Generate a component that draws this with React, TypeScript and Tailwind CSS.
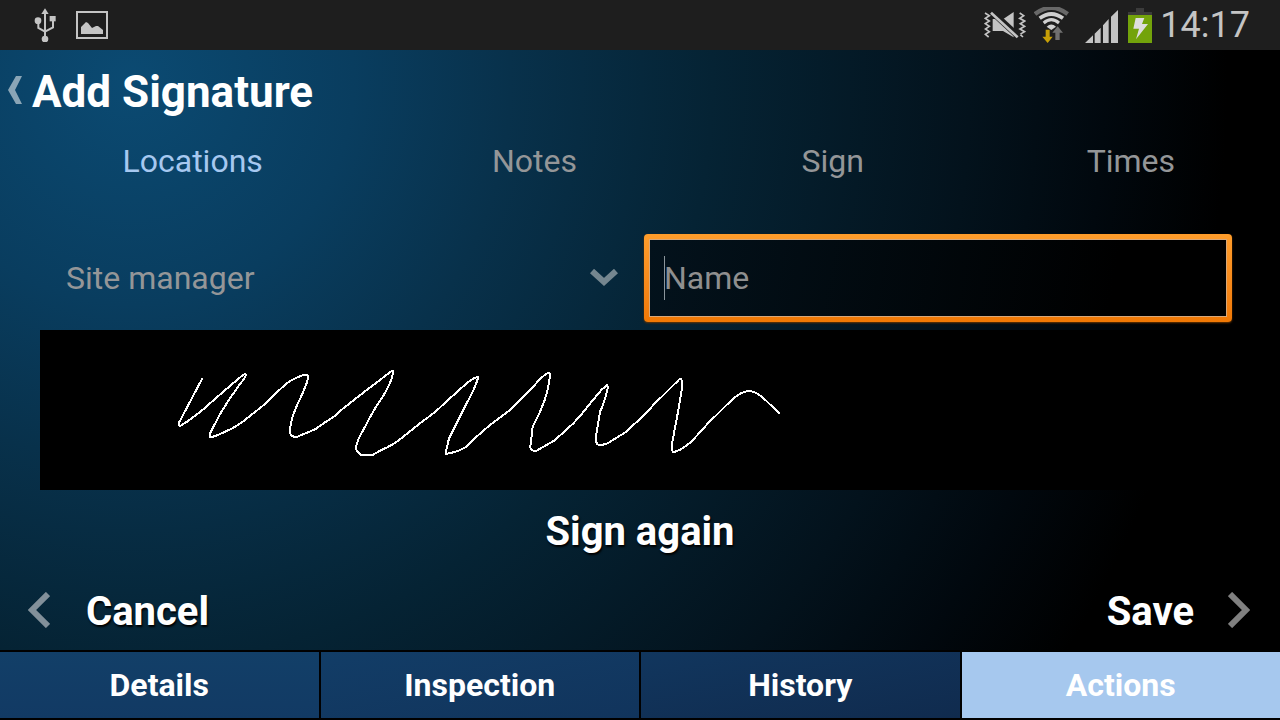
import type { ReactNode } from "react";

const UsbIcon = () => (
  <svg aria-hidden="true" className="h-[34px] w-[22px]" viewBox="102 24 66 102" fill="#c4c4c4" stroke="#c4c4c4">
    <path d="M135 25 146 42H124Z" stroke="none" />
    <path d="M135 40V112" strokeWidth="6" fill="none" />
    <circle cx="135" cy="117" r="10" stroke="none" />
    <circle cx="114" cy="62" r="10" stroke="none" />
    <rect x="149" y="48" width="18" height="16" stroke="none" />
    <path d="M115 66V84L135 95L159 82V62" strokeWidth="6" fill="none" />
  </svg>
);

const PictureIcon = () => (
  <svg aria-hidden="true" className="h-7 w-8" viewBox="0 0 32 28">
    <rect x="1" y="1" width="30" height="26" fill="none" stroke="#c4c4c4" strokeWidth="2" />
    <path d="M5 23V16L10 11L12 12L16 17L20 15L22 15L27 19V23Z" fill="#c4c4c4" />
  </svg>
);

const MuteVibrateIcon = () => (
  <svg aria-hidden="true" className="h-7 w-[42px]" viewBox="46 33 126 84">
    <path d="M49 39 62 47 50 55 62 63 50 71 62 79 50 87 62 95 50 103 60 111" fill="none" stroke="#c4c4c4" strokeWidth="5" />
    <path d="M153 39 165 47 153 55 168 63 155 71 168 79 154 87 168 95 154 103 163 111" fill="none" stroke="#c4c4c4" strokeWidth="5" />
    <path d="M72 57V93H103L135 112V36L104 57Z" fill="#c4c4c4" />
    <path d="M70 36 150 110" stroke="#1e1e1e" strokeWidth="19" />
    <path d="M67 38 147 112" stroke="#c4c4c4" strokeWidth="8" />
  </svg>
);

const WifiIcon = () => (
  <svg aria-hidden="true" className="h-9 w-[35px]" viewBox="196 21 105 108" fill="none">
    <path d="M199 42Q248 5 297 42" stroke="#686868" strokeWidth="13" />
    <path d="M213 55Q248 29 283 55" stroke="#d0d0d0" strokeWidth="11" />
    <path d="M225 69Q248 49 271 69" stroke="#d0d0d0" strokeWidth="9" />
    <path d="M234 80Q248 67 262 80L248 90Z" fill="#d0d0d0" />
    <path d="M231 89H243V110H252L237 129L221 110H231Z" fill="#c8a007" />
    <path d="M260 120H273V98H283L267 79L251 98H260Z" fill="#707070" />
  </svg>
);

const SignalIcon = () => (
  <svg aria-hidden="true" className="h-[33px] w-[33px]" viewBox="342 30 99 99" fill="#c4c4c4">
    <path d="M342 129 366 106V129ZM371 101 389 83V129H371ZM396 76 413 57V129H396ZM420 50 441 30V129H420Z" />
  </svg>
);

const BatteryIcon = () => (
  <svg aria-hidden="true" className="h-[35px] w-6" viewBox="471 24 72 105">
    <path d="M495 24H519V36H543V45H471V36H495Z" fill="#3b3b3b" />
    <rect x="471" y="45" width="72" height="84" fill="#73a30b" />
    <path d="M494 54H520L513 72H531L495 118L504 86H487Z" fill="#dedede" />
  </svg>
);

const Chevron = ({ d, box, className }: { d: string; box: string; className: string }) => (
  <svg aria-hidden="true" className={className} viewBox={box} fill="none" stroke="currentColor">
    <path d={d} strokeWidth="6" />
  </svg>
);

const signature =
  "M127 85 L57 218 Q54 228 62 227 C85 214 130 180 150 160 L205 112 L245 78 Q256 70 257 73 Q259 81 242 99 L210 145 Q184 184 171 210 L150 250 Q147 265 154 262 C180 254 190 247 204 241 C225 233 245 218 260 206 L310 166 L334 142 L380 100 Q417 75 439 75 Q448 76 443 89 C435 120 415 155 405 180 Q390 218 390 247 Q393 262 411 261 C430 252 450 245 467 237 L495 217 Q530 196 540 183 L620 120 L690 67 Q701 57 699 69 Q694 100 665 145 Q640 180 610 240 Q587 278 588 298 L602 315 L638 315 L660 302 Q700 285 720 268 L780 220 Q830 184 850 163 L922 98 Q948 78 955 82 Q945 115 920 160 L867 265 L857 309 Q857 314 865 310 Q895 306 921 289 L950 260 L990 225 L1050 180 L1125 104 Q1150 75 1165 68 Q1172 67 1170 79 Q1164 120 1154 150 Q1140 190 1118 231 L1111 290 Q1110 304 1130 302 L1184 271 L1240 220 Q1275 182 1285 167 L1324 120 L1341 105 Q1345 110 1341 124 Q1330 168 1320 185 L1307 265 Q1307 288 1325 285 Q1342 282 1351 275 L1396 247 L1455 193 L1480 165 L1555 91 Q1564 80 1565 91 Q1568 101 1566 115 Q1554 190 1540 260 Q1531 306 1541 306 Q1560 304 1595 274 L1645 219 L1710 155 Q1745 122 1768 123 Q1788 125 1810 144 L1860 192";

const TextButton = ({ children, className = "" }: { children: ReactNode; className?: string }) => (
  <button
    type="button"
    className={`flex items-center text-[40px] leading-[48px] font-bold text-white [text-shadow:1px_2px_2px_#000] ${className}`}
  >
    {children}
  </button>
);

const tabs = ["Locations", "Notes", "Sign", "Times"];
const sections = ["Details", "Inspection", "History", "Actions"];

export default function App() {
  return (
    <div className="flex min-h-screen flex-col bg-black font-[Roboto,sans-serif] text-white">
      <div className="flex h-[50px] items-center justify-between bg-[#1e1e1e] pr-[30px] pl-[34px] text-[#c4c4c4]">
        <div className="flex items-center gap-5">
          <UsbIcon />
          <PictureIcon />
        </div>
        <div className="flex items-center gap-2">
          <MuteVibrateIcon />
          <WifiIcon />
          <div className="flex items-end gap-2.5 pl-2">
            <SignalIcon />
            <BatteryIcon />
          </div>
          <time className="text-[36px] leading-[50px]">14:17</time>
        </div>
      </div>

      <div className="flex flex-1 flex-col bg-[radial-gradient(circle_1120px_at_130px_30px,#0b4a72_0%,#093d5f_20%,#08314b_34%,#052334_52%,#03121c_75%,#01080e_87%,#000_98%)]">
        <header className="flex h-[84px] items-center pl-2">
          <button type="button" aria-label="Back" className="pr-2 pb-1 text-[#8aa5b6]">
            <svg aria-hidden="true" className="h-7 w-4" viewBox="0 0 16 28" fill="currentColor">
              <path d="M8 0H14L7 14L14 28H8L0 14Z" />
            </svg>
          </button>
          <h1 className="text-[44px] leading-[52px] font-bold">Add Signature</h1>
        </header>

        <nav aria-label="Signature steps" className="grid h-14 grid-cols-[385fr_298fr_298fr_298fr]">
          {tabs.map((tab, i) => (
            <button
              key={tab}
              type="button"
              className={`pb-0.5 text-[32px] leading-[52px] ${i === 0 ? "text-[#a6c8f0]" : "text-[#949698]"}`}
            >
              {tab}
            </button>
          ))}
        </nav>

        <main className="flex flex-1 flex-col">
          <div className="grid grid-cols-2 gap-4 pt-11 pr-12 pl-10">
            <div className="relative flex items-center">
              <select
                aria-label="Role"
                className="h-[88px] w-full appearance-none bg-transparent pl-[26px] text-[32px] text-[#949698] outline-none"
              >
                <option>Site manager</option>
              </select>
              <Chevron
                d="M2 2 14 13 26 2"
                box="0 0 28 19"
                className="pointer-events-none absolute right-2.5 h-[19px] w-7 text-[#75868f]"
              />
            </div>
            <div className="relative flex items-center rounded-[4px] bg-linear-to-b from-[#ff9d2b] to-[#f07804] p-1.5 shadow-[0_1px_2px_#6b3500]">
              <div className="absolute inset-[5px] bg-[#d9a878]" />
              <div className="relative flex w-full items-center bg-[linear-gradient(100deg,#03121c,#000_80%)]">
                <input
                  type="text"
                  aria-label="Name"
                  placeholder="Name"
                  className="h-[76px] w-full bg-transparent pl-3.5 text-[32px] text-white placeholder-[#8f8f8f] outline-none"
                />
                <span aria-hidden="true" className="absolute left-3.5 h-11 w-px bg-[#8b959b]" />
              </div>
            </div>
          </div>

          <div className="mx-10 mt-2 bg-black">
            <svg role="img" aria-label="Signature" className="h-40 w-full" fill="none" shapeRendering="crispEdges">
              <g transform="translate(120 20) scale(0.33333)">
                <path d={signature} stroke="#fff" strokeWidth="6" strokeLinejoin="round" />
              </g>
            </svg>
          </div>

          <div className="flex flex-1 items-center justify-center pt-1">
            <TextButton>Sign again</TextButton>
          </div>

          <div className="flex h-20 items-center justify-between pr-[30px] pl-7">
            <TextButton className="gap-9">
              <Chevron d="M20 2 4 18 20 34" box="0 0 22 36" className="h-9 w-[22px] text-[#82909a]" />
              <span className="pt-1">Cancel</span>
            </TextButton>
            <TextButton className="gap-[34px]">
              <span className="pt-1">Save</span>
              <Chevron d="M2 2 18 18 2 34" box="0 0 22 36" className="h-9 w-[22px] text-[#808080]" />
            </TextButton>
          </div>
        </main>
      </div>

      <nav aria-label="Sections" className="bg-black py-0.5">
        <div className="grid grid-cols-4 gap-0.5 bg-black">
          {sections.map((section, i) => (
            <button
              key={section}
              type="button"
              className={`h-[66px] text-[32px] leading-[66px] font-bold text-white ${
                [
                  "bg-linear-to-b from-[#123f68] to-[#123a64]",
                  "bg-linear-to-br from-[#123d67] to-[#11345c]",
                  "bg-linear-to-br from-[#11365e] to-[#102b4e]",
                  "bg-[#a6c8ee]",
                ][i]
              }`}
            >
              {section}
            </button>
          ))}
        </div>
      </nav>
    </div>
  );
}
